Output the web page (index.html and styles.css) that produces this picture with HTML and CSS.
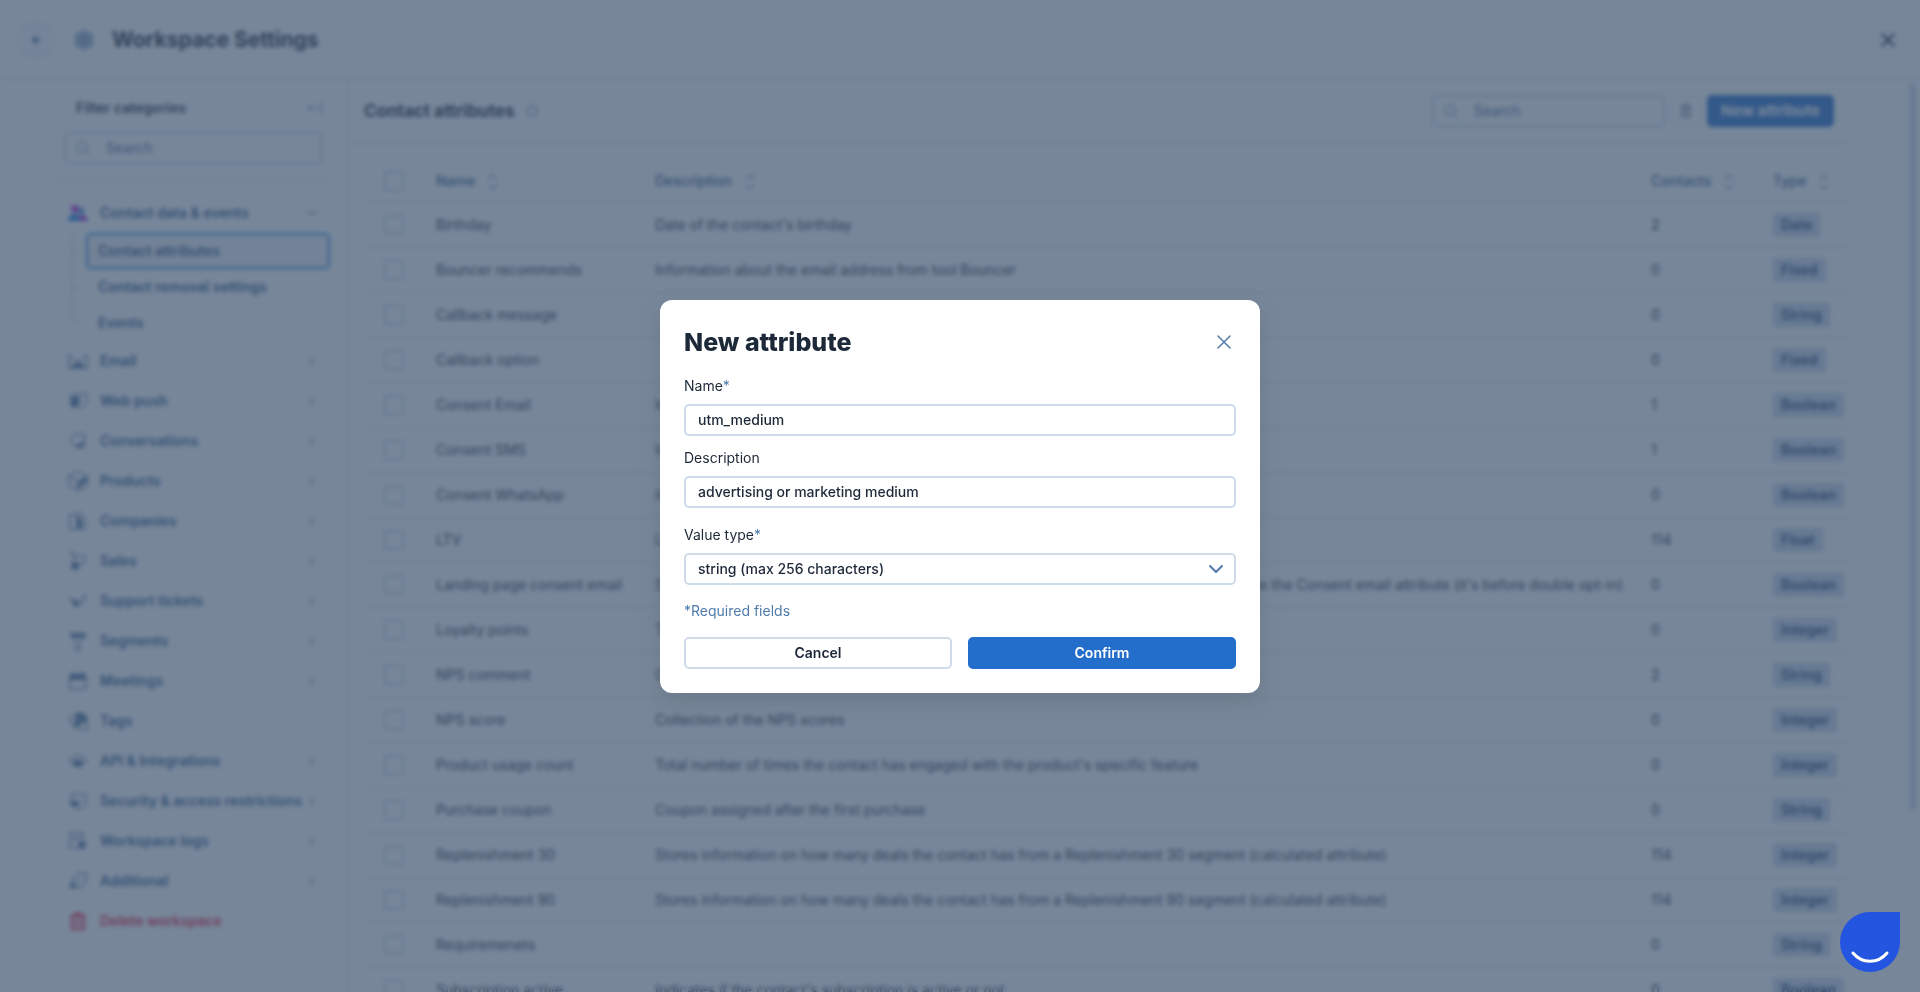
FILE: index.html
```html
<!DOCTYPE html>
<html lang="en">
<head>
    <meta charset="UTF-8">
    <meta name="viewport" content="width=device-width, initial-scale=1.0">
    <title>Workspace Settings</title>
    <link rel="stylesheet" href="styles.css">
</head>
<body>
    <div class="page">
        <header class="topbar">
            <button type="button" class="back" aria-label="Back">
                <svg width="10" height="10" viewBox="0 0 10 10"><path d="M8 5H2M5 2L2 5l3 3" /></svg>
            </button>
            <svg class="gear" width="20" height="20" viewBox="0 0 20 20"><path d="M10 1l7.500 4.500v9L10 19l-7.500-4.500v-9z" /><circle cx="10" cy="10" r="3" /></svg>
            <h1>Workspace Settings</h1>
            <button type="button" class="close-page" aria-label="Close">
                <svg width="14" height="14" viewBox="0 0 14 14"><path d="M1 1l12 12M13 1L1 13" /></svg>
            </button>
        </header>

        <div class="layout">
            <aside class="sidebar">
                <div class="filter-head">
                    <span>Filter categories</span>
                    <svg width="16" height="12" viewBox="0 0 16 12"><path d="M10 6H2M5 3L2 6l3 3M15 1v10" /></svg>
                </div>
                <label class="search">
                    <svg width="14" height="14" viewBox="0 0 14 14"><circle cx="6" cy="6" r="5" /><path d="M10 10l3 3" /></svg>
                    <input type="text" placeholder="Search" aria-label="Search categories">
                </label>
                <nav class="nav">
                    <a href="#" class="nav-item">
                        <svg class="people" width="20" height="20" viewBox="0 0 20 20"><circle cx="13.500" cy="8" r="3" fill="#2a8be0" /><path d="M8 18c0-4 2-6 5.500-6s6.500 2 6.500 6z" fill="#a333c8" /><circle cx="7" cy="6" r="4" fill="#b02fd0" /><path d="M0 18c0-5 3-7 7-7s5 3 5 7z" fill="#1c7fe6" /></svg>
                        <span>Contact data &amp; events</span>
                        <svg class="arrow" width="12" height="12" viewBox="0 0 12 12"><path d="M2 4l4 4 4-4" /></svg>
                    </a>
                    <ul class="subnav">
                        <li><a href="#" class="active">Contact attributes</a></li>
                        <li><a href="#">Contact removal settings</a></li>
                        <li><a href="#">Events</a></li>
                    </ul>
                    <a href="#" class="nav-item">
                        <svg width="20" height="20" viewBox="0 0 20 20"><path d="M1 4v13h18V4l-9 7z" /><path class="fill" d="M2 17l6-6 2 1 2-1 6 6z" /></svg>
                        <span>Email</span>
                        <svg class="arrow" width="12" height="12" viewBox="0 0 12 12"><path d="M4 2l4 4-4 4" /></svg>
                    </a>
                    <a href="#" class="nav-item">
                        <svg width="20" height="20" viewBox="0 0 20 20"><path d="M9 3h10v6c0 4-3 7-7 8" /><path d="M1 5l8-2" /><path class="fill" d="M2 10a5 5 0 0 1 8-4l3 2-2 4-1 4-4 1a6 6 0 0 1-4-7z" /></svg>
                        <span>Web push</span>
                        <svg class="arrow" width="12" height="12" viewBox="0 0 12 12"><path d="M4 2l4 4-4 4" /></svg>
                    </a>
                    <a href="#" class="nav-item">
                        <svg width="20" height="20" viewBox="0 0 20 20"><path d="M16 3h-6a6 6 0 0 0-2 12h8z" /><path class="fill" d="M8 15l7-5v7H9z" /></svg>
                        <span>Conversations</span>
                        <svg class="arrow" width="12" height="12" viewBox="0 0 12 12"><path d="M4 2l4 4-4 4" /></svg>
                    </a>
                    <a href="#" class="nav-item">
                        <svg width="20" height="20" viewBox="0 0 20 20"><path d="M10 1l9 4v10l-9 4-9-4V5zM1 5l9 5v9" /><path class="fill" d="M10 10l9-5v6l-6 3-3 5z" /></svg>
                        <span>Products</span>
                        <svg class="arrow" width="12" height="12" viewBox="0 0 12 12"><path d="M4 2l4 4-4 4" /></svg>
                    </a>
                    <a href="#" class="nav-item">
                        <svg width="20" height="20" viewBox="0 0 20 20"><path d="M2 4h7v14H2zM9 2h3l5 5v11H9" /><path class="fill" d="M9 5l5 3v9H9z" /></svg>
                        <span>Companies</span>
                        <svg class="arrow" width="12" height="12" viewBox="0 0 12 12"><path d="M4 2l4 4-4 4" /></svg>
                    </a>
                    <a href="#" class="nav-item">
                        <svg width="20" height="20" viewBox="0 0 20 20"><path d="M2 2h3l2 11h8l2-3V5H6" /><circle class="fill" cx="7" cy="15" r="4" /></svg>
                        <span>Sales</span>
                        <svg class="arrow" width="12" height="12" viewBox="0 0 12 12"><path d="M4 2l4 4-4 4" /></svg>
                    </a>
                    <a href="#" class="nav-item">
                        <svg width="20" height="20" viewBox="0 0 20 20"><path d="M2 7l5 7L17 4v5l-7 7" /><path class="fill" d="M3 8h3l3 3 3-1-2 5-3 1z" /></svg>
                        <span>Support tickets</span>
                        <svg class="arrow" width="12" height="12" viewBox="0 0 12 12"><path d="M4 2l4 4-4 4" /></svg>
                    </a>
                    <a href="#" class="nav-item">
                        <svg width="20" height="20" viewBox="0 0 20 20"><path d="M5 6l3 6v7h4v-7l3-6" /><path class="fill" d="M1 2h18l-3 5H4z" /></svg>
                        <span>Segments</span>
                        <svg class="arrow" width="12" height="12" viewBox="0 0 12 12"><path d="M4 2l4 4-4 4" /></svg>
                    </a>
                    <a href="#" class="nav-item">
                        <svg width="20" height="20" viewBox="0 0 20 20"><path d="M2 6h16v12H2z" /><path class="fill" d="M2 3h3V1h2v2h6V1h2v2h3v6H2z" /></svg>
                        <span>Meetings</span>
                        <svg class="arrow" width="12" height="12" viewBox="0 0 12 12"><path d="M4 2l4 4-4 4" /></svg>
                    </a>
                    <a href="#" class="nav-item">
                        <svg width="20" height="20" viewBox="0 0 20 20"><path d="M7 3L1 8l5 8 13 3V9" /><path class="fill" d="M8 2l5-1 6 4v6l-5 1-6 5-2-4z" /></svg>
                        <span>Tags</span>
                    </a>
                    <a href="#" class="nav-item">
                        <svg width="20" height="20" viewBox="0 0 20 20"><path d="M4 13L1 9l4-2 5-4 5 4 4 2-3 4" /><path class="fill" d="M5 10l5-2 5 2v4l-5 3-5-3z" /></svg>
                        <span>API &amp; Integrations</span>
                        <svg class="arrow" width="12" height="12" viewBox="0 0 12 12"><path d="M4 2l4 4-4 4" /></svg>
                    </a>
                    <a href="#" class="nav-item">
                        <svg width="20" height="20" viewBox="0 0 20 20"><path d="M4 3h14v8c0 4-3 6-7 7-4-1-6-3-7-7z" /><path class="fill" d="M2 11l4-2 3 2 4-3-2 6-4 2-5-2z" /></svg>
                        <span>Security &amp; access restrictions</span>
                        <svg class="arrow" width="12" height="12" viewBox="0 0 12 12"><path d="M4 2l4 4-4 4" /></svg>
                    </a>
                    <a href="#" class="nav-item">
                        <svg width="20" height="20" viewBox="0 0 20 20"><path d="M2 2h13v9M2 2v15h8M5 6h7M5 9h6" /><circle class="fill" cx="14" cy="14" r="4" /></svg>
                        <span>Workspace logs</span>
                        <svg class="arrow" width="12" height="12" viewBox="0 0 12 12"><path d="M4 2l4 4-4 4" /></svg>
                    </a>
                    <a href="#" class="nav-item">
                        <svg width="20" height="20" viewBox="0 0 20 20"><path d="M5 14V7l6-5 8 1-1 7-5 6H7M8 11l5-4" /><path class="fill" d="M1 17l3-7 6 7z" /></svg>
                        <span>Additional</span>
                        <svg class="arrow" width="12" height="12" viewBox="0 0 12 12"><path d="M4 2l4 4-4 4" /></svg>
                    </a>
                    <a href="#" class="nav-item delete">
                        <svg width="20" height="20" viewBox="0 0 20 20"><path d="M3 5h14M7 5c0-4 6-4 6 0M4 5v13h12V5M8 9v5M12 9v5" /></svg>
                        <span>Delete workspace</span>
                    </a>
                </nav>
            </aside>

            <main class="content">
                <div class="content-head">
                    <h2>Contact attributes</h2>
                    <svg class="info" width="12" height="12" viewBox="0 0 12 12"><circle cx="6" cy="6" r="5" /></svg>
                    <label class="search">
                        <svg width="14" height="14" viewBox="0 0 14 14"><circle cx="6" cy="6" r="5" /><path d="M10 10l3 3" /></svg>
                        <input type="text" placeholder="Search" aria-label="Search attributes">
                    </label>
                    <button type="button" class="trash" aria-label="Delete selected">
                        <svg width="12" height="14" viewBox="0 0 12 14"><path d="M1 3h10M4 3V1h4v2M2 3v10h8V3M5 6v4M7 6v4" /></svg>
                    </button>
                    <button type="button" class="new-attribute">New attribute</button>
                </div>

                <table class="attributes">
                    <thead>
                        <tr>
                            <th class="col-check"><input type="checkbox" aria-label="Select all"></th>
                            <th class="col-name">Name <svg width="12" height="18" viewBox="0 0 12 18"><path d="M2 6l4-4 4 4M2 12l4 4 4-4" /></svg></th>
                            <th>Description <svg width="12" height="18" viewBox="0 0 12 18"><path d="M2 6l4-4 4 4M2 12l4 4 4-4" /></svg></th>
                            <th class="col-contacts">Contacts <svg width="12" height="18" viewBox="0 0 12 18"><path d="M2 6l4-4 4 4M2 12l4 4 4-4" /></svg></th>
                            <th class="col-type">Type <svg width="12" height="18" viewBox="0 0 12 18"><path d="M2 6l4-4 4 4M2 12l4 4 4-4" /></svg></th>
                        </tr>
                    </thead>
                    <tbody>
                        <tr><td><input type="checkbox" aria-label="Birthday"></td><td>Birthday</td><td>Date of the contact's birthday</td><td>2</td><td><span class="tag">Date</span></td></tr>
                        <tr><td><input type="checkbox" aria-label="Bouncer recommends"></td><td>Bouncer recommends</td><td>Information about the email address from tool Bouncer</td><td>0</td><td><span class="tag">Fixed</span></td></tr>
                        <tr><td><input type="checkbox" aria-label="Callback message"></td><td>Callback message</td><td></td><td>0</td><td><span class="tag">String</span></td></tr>
                        <tr><td><input type="checkbox" aria-label="Callback option"></td><td>Callback option</td><td></td><td>0</td><td><span class="tag">Fixed</span></td></tr>
                        <tr><td><input type="checkbox" aria-label="Consent Email"></td><td>Consent Email</td><td>Indicates the email consent</td><td>1</td><td><span class="tag">Boolean</span></td></tr>
                        <tr><td><input type="checkbox" aria-label="Consent SMS"></td><td>Consent SMS</td><td>Indicates the SMS consent</td><td>1</td><td><span class="tag">Boolean</span></td></tr>
                        <tr><td><input type="checkbox" aria-label="Consent WhatsApp"></td><td>Consent WhatsApp</td><td>Indicates the WhatsApp consent</td><td>0</td><td><span class="tag">Boolean</span></td></tr>
                        <tr><td><input type="checkbox" aria-label="LTV"></td><td>LTV</td><td>Lifetime value</td><td>114</td><td><span class="tag">Float</span></td></tr>
                        <tr><td><input type="checkbox" aria-label="Landing page consent email"></td><td>Landing page consent email</td><td>Stores information about the consent given by the contact on a landing page, used to update the Consent email attribute (it's before double opt-in)</td><td>0</td><td><span class="tag">Boolean</span></td></tr>
                        <tr><td><input type="checkbox" aria-label="Loyalty points"></td><td>Loyalty points</td><td>Total number of points</td><td>0</td><td><span class="tag">Integer</span></td></tr>
                        <tr><td><input type="checkbox" aria-label="NPS comment"></td><td>NPS comment</td><td>Collection of the NPS comments</td><td>2</td><td><span class="tag">String</span></td></tr>
                        <tr><td><input type="checkbox" aria-label="NPS score"></td><td>NPS score</td><td>Collection of the NPS scores</td><td>0</td><td><span class="tag">Integer</span></td></tr>
                        <tr><td><input type="checkbox" aria-label="Product usage count"></td><td>Product usage count</td><td>Total number of times the contact has engaged with the product's specific feature</td><td>0</td><td><span class="tag">Integer</span></td></tr>
                        <tr><td><input type="checkbox" aria-label="Purchase coupon"></td><td>Purchase coupon</td><td>Coupon assigned after the first purchase</td><td>0</td><td><span class="tag">String</span></td></tr>
                        <tr><td><input type="checkbox" aria-label="Replenishment 30"></td><td>Replenishment 30</td><td>Stores information on how many deals the contact has from a Replenishment 30 segment (calculated attribute)</td><td>114</td><td><span class="tag">Integer</span></td></tr>
                        <tr><td><input type="checkbox" aria-label="Replenishment 90"></td><td>Replenishment 90</td><td>Stores information on how many deals the contact has from a Replenishment 90 segment (calculated attribute)</td><td>114</td><td><span class="tag">Integer</span></td></tr>
                        <tr><td><input type="checkbox" aria-label="Requiremenets"></td><td>Requiremenets</td><td></td><td>0</td><td><span class="tag">String</span></td></tr>
                        <tr><td><input type="checkbox" aria-label="Subscription active"></td><td>Subscription active</td><td>Indicates if the contact's subscription is active or not</td><td>0</td><td><span class="tag">Boolean</span></td></tr>
                    </tbody>
                </table>
            </main>
            <div class="scrollbar"><div class="thumb"></div></div>
        </div>
    </div>

    <div class="overlay">
        <form class="modal" role="dialog" aria-labelledby="modal-title">
            <div class="modal-head">
                <h2 id="modal-title">New attribute</h2>
                <button type="button" class="close-modal" aria-label="Close">
                    <svg width="16" height="16" viewBox="0 0 16 16"><path d="M2 2l12 12M14 2L2 14" /></svg>
                </button>
            </div>
            <div class="field">
                <label for="name">Name<span>*</span></label>
                <input type="text" id="name" value="utm_medium">
            </div>
            <div class="field">
                <label for="description">Description</label>
                <input type="text" id="description" value="advertising or marketing medium">
            </div>
            <div class="field field-type">
                <label for="type">Value type<span>*</span></label>
                <div class="select">
                    <select id="type">
                        <option>string (max 256 characters)</option>
                    </select>
                    <svg width="16" height="16" viewBox="0 0 16 16"><path d="M2 5l6 6 6-6" /></svg>
                </div>
            </div>
            <p class="required">*Required fields</p>
            <div class="actions">
                <button type="button" class="cancel">Cancel</button>
                <button type="button" class="confirm">Confirm</button>
            </div>
        </form>
    </div>

    <button type="button" class="chat" aria-label="Open chat">
        <svg width="60" height="60" viewBox="0 0 60 60"><path d="M13 41c9 11 25 11 34 0" /></svg>
    </button>
</body>
</html>
```
FILE: styles.css
```css
* {
    box-sizing: border-box;
}

body {
    margin: 0;
    height: 100vh;
    overflow: hidden;
    font-family: Inter, "Noto Sans", sans-serif;
    font-size: 14px;
    line-height: 20px;
    color: #1d2939;
    background-color: #ffffff;
}

h1,
h2,
p,
ul {
    margin: 0;
    padding: 0;
}

button,
input,
select {
    font: inherit;
    color: inherit;
}

button {
    padding: 0;
    border: none;
    background: none;
    cursor: pointer;
}

a {
    color: inherit;
    text-decoration: none;
}

svg {
    flex: none;
    fill: none;
    stroke: currentColor;
    stroke-width: 2;
    stroke-linecap: round;
    stroke-linejoin: round;
}

.page {
    display: flex;
    flex-direction: column;
    height: 100vh;
}

/* top bar */
.topbar {
    display: flex;
    align-items: center;
    height: 80px;
    flex: none;
    padding: 2px 24px 0 16px;
    border-bottom: 2px solid #e9eef4;
}

.back {
    display: flex;
    align-items: center;
    justify-content: center;
    width: 40px;
    height: 40px;
    border-radius: 50%;
    background-color: #f7f9fb;
    color: #3d6696;
}

.gear {
    margin: 0 18px;
    color: #5f83ad;
    fill: #b9cbe0;
}

h1 {
    font-size: 21px;
    font-weight: 700;
}

.close-page {
    width: 16px;
    height: 16px;
    margin-left: auto;
    display: flex;
    align-items: center;
    justify-content: center;
}

.layout {
    display: flex;
    flex: 1;
    min-height: 0;
}

/* sidebar */
.sidebar {
    width: 349px;
    flex: none;
    padding: 16px 17px 0 56px;
    border-right: 2px solid #e9eef4;
    overflow: hidden;
}

.filter-head {
    display: flex;
    align-items: center;
    justify-content: space-between;
    height: 24px;
    padding: 0 8px 0 20px;
    margin-bottom: 12px;
    font-weight: 600;
}

.filter-head svg {
    color: #5a7fa8;
    stroke-width: 1;
}

.search {
    display: flex;
    align-items: center;
    gap: 16px;
    height: 32px;
    padding: 0 10px;
    border: 2px solid #cfdbe8;
    border-radius: 5px;
    color: #5a7fa8;
}

.search svg {
    stroke-width: 1;
}

.search input {
    width: 100%;
    min-width: 0;
    padding: 0;
    border: none;
    background: none;
    outline: none;
}

.search input::placeholder {
    color: #3d6696;
}

.sidebar .search {
    margin: 0 8px;
}

.nav {
    margin-top: 16px;
    padding-top: 12px;
    border-top: 1px solid #dbe4ee;
    color: #2c5688;
    font-weight: 600;
}

.nav-item {
    display: flex;
    align-items: center;
    height: 40px;
    padding: 0 12px;
    white-space: nowrap;
}

.nav-item span {
    margin-left: 12px;
}

.nav-item .fill {
    fill: currentColor;
    stroke: none;
    opacity: 0.8;
}

.nav-item svg {
    stroke-width: 1;
}

.nav-item .people {
    stroke: none;
}

.nav-item .arrow {
    margin-left: auto;
    stroke-width: 1;
}

.subnav {
    list-style: none;
    margin-left: 16px;
    font-weight: 600;
}

.subnav li {
    position: relative;
    display: flex;
    height: 36px;
    padding-left: 14px;
}

/* tree lines */
.subnav li::before {
    content: "";
    position: absolute;
    left: 0;
    top: 0;
    width: 10px;
    height: 50%;
    border-left: 1px solid #cfdbe8;
    border-bottom: 1px solid #cfdbe8;
}

.subnav li:not(:last-child)::after {
    content: "";
    position: absolute;
    left: 0;
    top: 50%;
    height: 50%;
    border-left: 1px solid #cfdbe8;
}

.subnav a {
    flex: 1;
    padding: 6px 10px;
    border: 2px solid transparent;
    border-radius: 5px;
}

.subnav .active {
    border-color: #1c86e6;
    background-color: #f1f3f5;
}

.nav-item.delete {
    color: #e5193c;
}

.delete svg {
    stroke-width: 2;
}

/* content */
.content {
    flex: 1;
    min-width: 0;
    overflow: hidden;
}

.content-head {
    display: flex;
    align-items: center;
    height: 64px;
    padding: 0 14px 0 15px;
    border-bottom: 2px solid #e9eef4;
}

.content-head h2 {
    font-size: 17px;
    font-weight: 700;
}

.info {
    margin-left: 12px;
    color: #3d6696;
    stroke-width: 1;
}

.content-head .search {
    width: 233px;
    margin-left: auto;
}

.trash {
    display: flex;
    align-items: center;
    justify-content: center;
    width: 30px;
    height: 32px;
    margin: 0 6px;
    border: 1px solid #e9eef4;
    border-radius: 5px;
    color: #41556e;
}

.trash svg {
    stroke-width: 1;
}

.new-attribute {
    height: 32px;
    padding: 0 14px;
    border-radius: 5px;
    background-color: #236dcb;
    color: #ffffff;
    font-size: 15px;
    font-weight: 700;
}

.attributes {
    width: calc(100% - 18px);
    margin: 16px 0 0 18px;
    table-layout: fixed;
    border-spacing: 0;
    text-align: left;
    white-space: nowrap;
}

.attributes th,
.attributes td {
    height: 45px;
    padding: 0;
    border-bottom: 1px solid #dbe4ee;
}

.attributes th {
    height: 43px;
    color: #2c5688;
    font-weight: 500;
}

.attributes th svg {
    margin-left: 8px;
    vertical-align: middle;
    stroke-width: 1;
}

.attributes th:first-child,
.attributes td:first-child {
    padding-left: 17px;
}

.attributes input {
    display: block;
    appearance: none;
    width: 20px;
    height: 20px;
    margin: 0;
    border: 2px solid #cfdbe8;
    border-radius: 3px;
}

.col-check {
    width: 69px;
}

.col-name {
    width: 219px;
}

.col-contacts {
    width: 122px;
}

.col-type {
    width: 75px;
}

.tag {
    display: inline-block;
    height: 24px;
    padding: 0 8px;
    border-radius: 3px;
    background-color: #c9d8ea;
    font-weight: 600;
    line-height: 24px;
    color: #1f4370;
}

.scrollbar {
    width: 72px;
    flex: none;
    display: flex;
    justify-content: flex-end;
    padding: 4px 4px 0 0;
}

.thumb {
    width: 6px;
    height: 80%;
    border-radius: 3px;
    background-color: #c9d8ea;
}

/* modal */
.overlay {
    position: fixed;
    inset: 0;
    display: flex;
    align-items: center;
    justify-content: center;
    background-color: rgba(58, 80, 107, 0.69);
    backdrop-filter: blur(2px);
}

.modal {
    width: 600px;
    padding: 24px;
    border-radius: 12px;
    background-color: #ffffff;
    box-shadow: 0 8px 20px rgba(80, 95, 100, 0.3);
}

.modal-head {
    display: flex;
    align-items: center;
    justify-content: space-between;
    height: 36px;
    margin-bottom: 16px;
}

.modal-head h2 {
    font-size: 25px;
    font-weight: 800;
}

.close-modal {
    width: 24px;
    height: 24px;
    display: flex;
    align-items: center;
    justify-content: center;
    color: #4f7bab;
}

.close-modal svg {
    stroke-width: 1.500;
}

.field {
    margin-bottom: 12px;
}

.field-type {
    margin: 17px 0 16px;
}

.field label {
    display: block;
    margin-bottom: 8px;
}

.field label span,
.required {
    color: #4f7bab;
}

.field input,
.select {
    display: block;
    width: 100%;
    height: 32px;
    border: 2px solid #cfdbe8;
    border-radius: 5px;
    background-color: #ffffff;
    font-weight: 500;
}

.field input {
    padding: 0 12px;
}

.select {
    display: grid;
    align-items: center;
}

.select select,
.select svg {
    grid-area: 1 / 1;
}

.select select {
    appearance: none;
    height: 28px;
    padding: 0 12px;
    border: none;
    background: none;
}

.select svg {
    justify-self: end;
    margin-right: 10px;
    color: #4f7bab;
    pointer-events: none;
}

.actions {
    display: flex;
    gap: 16px;
    margin-top: 16px;
}

.actions button {
    flex: 1;
    height: 32px;
    border: 2px solid #cfdbe8;
    border-radius: 5px;
    font-weight: 600;
}

.actions .confirm {
    border-color: #236dcb;
    background-color: #236dcb;
    color: #ffffff;
}

.chat {
    position: fixed;
    right: 20px;
    bottom: 20px;
    width: 60px;
    height: 60px;
    border-radius: 50% 1px 50% 50%;
    background-color: #2455e0;
    color: #ffffff;
}

.chat svg {
    display: block;
    stroke-width: 3;
}
```
